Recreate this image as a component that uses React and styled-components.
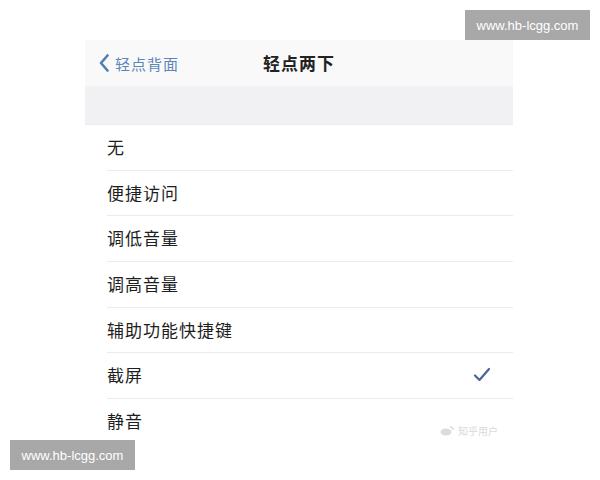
import React from "react";
import styled, { createGlobalStyle } from "styled-components";

const Global = createGlobalStyle`
  html, body { margin: 0; padding: 0; background: #ffffff; }
  body { width: 600px; height: 480px; overflow: hidden; font-family: "Noto Sans CJK SC", "Noto Sans", sans-serif; }
`;

const Page = styled.div`
  position: relative;
  width: 600px;
  height: 480px;
  padding: 40px 0 0 85px;
  box-sizing: border-box;
`;

const Panel = styled.div`
  width: 428px;
  display: flex;
  flex-direction: column;
  background: #ffffff;
`;

const NavBar = styled.div`
  height: 46px;
  background: #f9f9fa;
  display: grid;
  grid-template-columns: 1fr auto 1fr;
  align-items: center;
  padding-left: 14px;
`;

const Back = styled.div`
  display: flex;
  align-items: center;
  gap: 6px;
  color: #5b87b8;
  font-size: 15px;
  letter-spacing: 1px;
`;

const Title = styled.div`
  font-size: 17px;
  font-weight: 700;
  color: #222;
  letter-spacing: 1px;
  margin-right: 14px;
  margin-bottom: 1px;
`;

const Band = styled.div`
  height: 38px;
  background: #f1f1f4;
  border-bottom: 1px solid #ececee;
`;

const Row = styled.div`
  height: 45.7px;
  box-sizing: border-box;
  margin-left: 22px;
  padding-right: 22px;
  padding-bottom: 2px;
  display: flex;
  align-items: center;
  justify-content: space-between;
  border-bottom: ${(p) => (p.$last ? "none" : "1px solid #ebebed")};
  font-size: 17px;
  color: #1e1e1e;
  letter-spacing: 1px;
`;

const Mark = styled.div`
  position: absolute;
  background: #a8a8a8;
  color: #ffffff;
  font-family: "Liberation Sans", Arial, sans-serif;
  font-size: 13px;
  width: 125px;
  height: 30px;
  display: flex;
  align-items: center;
  justify-content: center;
  ${(p) => p.$pos}
`;

const Weibo = styled.div`
  position: absolute;
  left: 440px;
  top: 423px;
  display: flex;
  align-items: center;
  gap: 4px;
  color: #dadada;
  font-size: 10px;
`;

const items = ["无", "便捷访问", "调低音量", "调高音量", "辅助功能快捷键", "截屏", "静音"];

export default function App() {
  return (
    <Page>
      <Global />
      <Panel>
        <NavBar>
          <Back>
            <svg width="10" height="20" viewBox="0 0 10 20">
              <path d="M8.5 2.5 L2 10 L8.5 17.5" fill="none" stroke="#4f7fb4" strokeWidth="2.6" strokeLinecap="round" strokeLinejoin="round" />
            </svg>
            <span>轻点背面</span>
          </Back>
          <Title>轻点两下</Title>
          <div />
        </NavBar>
        <Band />
        {items.map((t, i) => (
          <Row key={t} $last={i === items.length - 1}>
            <span>{t}</span>
            {t === "截屏" && (
              <svg width="18" height="16" viewBox="0 0 18 16">
                <path d="M2 8.5 L6.5 13 L16 2" fill="none" stroke="#4b6696" strokeWidth="2.2" strokeLinecap="round" strokeLinejoin="round" />
              </svg>
            )}
          </Row>
        ))}
      </Panel>
      <Weibo>
        <svg width="14" height="10" viewBox="0 0 14 10">
          <ellipse cx="6" cy="6" rx="5.5" ry="3.5" fill="#dcdcdc" />
          <path d="M10 1 Q13 1 13 4" fill="none" stroke="#dcdcdc" strokeWidth="1.5" />
        </svg>
        <span>知乎用户</span>
      </Weibo>
      <Mark $pos="left: 465px; top: 10px;">www.hb-lcgg.com</Mark>
      <Mark $pos="left: 10px; top: 440px;">www.hb-lcgg.com</Mark>
    </Page>
  );
}
